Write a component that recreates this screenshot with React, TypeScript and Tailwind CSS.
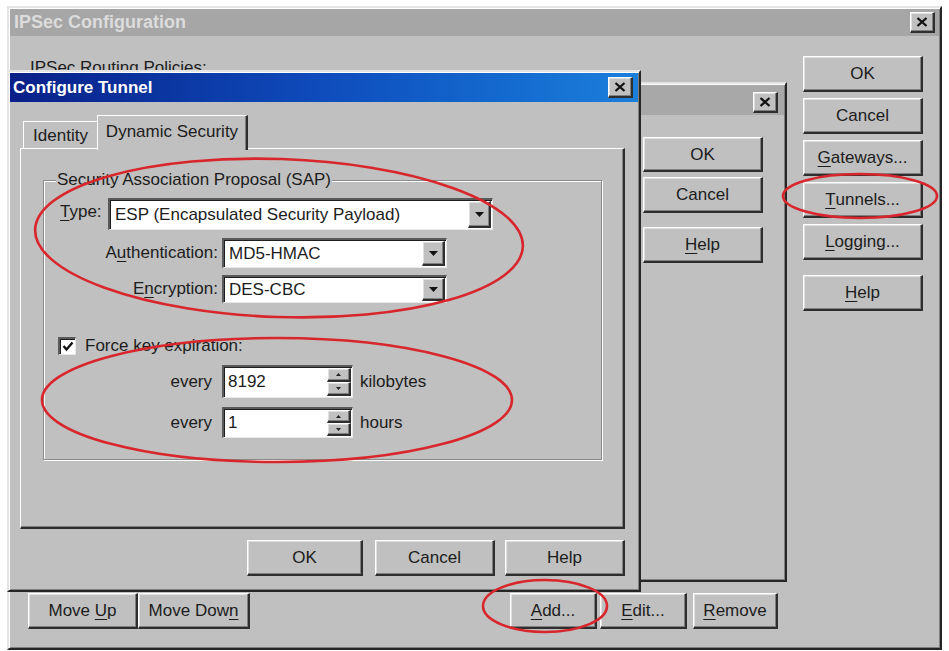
import type { ReactNode } from 'react';

// Classic 3D bevels
const raised =
  'bg-[#c0c0c0] border-t border-l border-t-white border-l-white border-r-2 border-b-2 border-r-[#2e2e2e] border-b-[#2e2e2e] shadow-[inset_-1px_-1px_0_#808080,inset_1px_1px_0_#dfdfdf]';
const sunken =
  'bg-white border-t-2 border-l-2 border-t-[#5a5a5a] border-l-[#5a5a5a] border-r border-b border-r-[#e8e8e8] border-b-[#e8e8e8] shadow-[inset_1px_1px_0_#1e1e1e]';
const frame =
  'bg-[#c0c0c0] border-2 border-t-[#e4e4e4] border-l-[#e4e4e4] border-r-[#262626] border-b-[#262626] shadow-[inset_1px_1px_0_#fff,inset_-1px_-1px_0_#808080]';

function Btn({ children, className = '' }: { children: ReactNode; className?: string }) {
  return (
    <button type="button" className={`${raised} flex items-center justify-center leading-none text-[#1c1c1c] ${className}`}>
      {children}
    </button>
  );
}

function Key({ children }: { children: ReactNode }) {
  return <span className="underline decoration-1 underline-offset-[3px]">{children}</span>;
}

function CloseBox({ className = '' }: { className?: string }) {
  return (
    <div className={`${raised} w-[25px] h-[21px] flex items-center justify-center ${className}`}>
      <svg width="12" height="10" viewBox="0 0 12 10">
        <path d="M1.5 1 L10.5 9 M10.5 1 L1.5 9" stroke="#111" strokeWidth="2.3" />
      </svg>
    </div>
  );
}

function Combo({ value, className = '' }: { value: string; className?: string }) {
  return (
    <div className={`${sunken} flex p-px ${className}`}>
      <div className="flex-1 flex items-center pl-[4px] whitespace-nowrap overflow-hidden">{value}</div>
      <div className={`${raised} w-[23px] flex items-center justify-center`}>
        <svg width="9" height="5" viewBox="0 0 9 5">
          <path d="M0 0H9L4.5 5Z" fill="#111" />
        </svg>
      </div>
    </div>
  );
}

function Spinner({ value, className = '' }: { value: string; className?: string }) {
  return (
    <div className={`${sunken} flex p-px ${className}`}>
      <div className="flex-1 flex items-center pl-[3px]">{value}</div>
      <div className="w-[24px] flex flex-col">
        <div className={`${raised} flex-1 flex items-center justify-center`}>
          <svg width="5" height="3" viewBox="0 0 5 3">
            <path d="M0 3H5L2.5 0Z" fill="#222" />
          </svg>
        </div>
        <div className={`${raised} flex-1 flex items-center justify-center`}>
          <svg width="5" height="3" viewBox="0 0 5 3">
            <path d="M0 0H5L2.5 3Z" fill="#222" />
          </svg>
        </div>
      </div>
    </div>
  );
}

function MainWindow() {
  return (
    <div className={`absolute left-[7px] top-[6px] w-[935px] h-[644px] flex flex-col p-px ${frame}`}>
      <div className="h-[27px] bg-[#a6a6a6] flex items-center pl-[4px] pr-[4px]">
        <span className="font-bold text-[18px] text-[#dcdcdc]">IPSec Configuration</span>
        <CloseBox className="ml-auto" />
      </div>
      <div className="flex-1 flex">
        <div className="flex-1 flex flex-col pl-[18px] pb-[18px]">
          <div className="mt-[22px] pl-[2px] leading-[20px]">IPSec Routing Policies:</div>
          <div className="flex-1" />
          <div className="flex h-[36px]">
            <Btn className="w-[110px]">
              Move&nbsp;<Key>U</Key>p
            </Btn>
            <Btn className="w-[112px]">
              Move Dow<Key>n</Key>
            </Btn>
            <Btn className="w-[87px] ml-[260px]">
              <Key>A</Key>dd...
            </Btn>
            <Btn className="w-[87px] ml-[3px]">
              <Key>E</Key>dit...
            </Btn>
            <Btn className="w-[85px] ml-[6px]">
              <Key>R</Key>emove
            </Btn>
          </div>
        </div>
        <div className="w-[120px] mr-[16px] pt-[20px] flex flex-col gap-[6px]">
          <Btn className="h-[36px]">OK</Btn>
          <Btn className="h-[36px]">Cancel</Btn>
          <Btn className="h-[36px]">
            <Key>G</Key>ateways...
          </Btn>
          <Btn className="h-[36px]">
            <Key>T</Key>unnels...
          </Btn>
          <Btn className="h-[36px]">
            <Key>L</Key>ogging...
          </Btn>
          <Btn className="h-[36px] mt-[9px]">
            <Key>H</Key>elp
          </Btn>
        </div>
      </div>
    </div>
  );
}

function PolicyDialog() {
  return (
    <div className={`absolute left-[470px] top-[82px] w-[317px] h-[500px] flex flex-col p-px ${frame}`}>
      <div className="h-[30px] bg-[#a8a8a8] flex items-end justify-end pr-[6px] pb-[2px]">
        <CloseBox />
      </div>
      <div className="flex flex-col items-end pr-[21px]">
        <Btn className="w-[120px] h-[35px] mt-[22px]">OK</Btn>
        <Btn className="w-[120px] h-[36px] mt-[5px]">Cancel</Btn>
        <Btn className="w-[120px] h-[36px] mt-[14px]">
          <Key>H</Key>elp
        </Btn>
      </div>
    </div>
  );
}

function TunnelDialog() {
  return (
    <div className={`absolute left-[7px] top-[70px] w-[634px] h-[522px] flex flex-col p-px ${frame}`}>
      <div className="h-[29px] bg-linear-to-r from-[#0a1f88] via-[#0f4cbc] to-[#1c7fdc] flex items-center pl-[3px] pr-[5px]">
        <span className="font-bold text-[17px] text-white">Configure Tunnel</span>
        <CloseBox className="ml-auto" />
      </div>

      {/* tab strip */}
      <div className="flex items-end h-[34px] mt-[13px] pl-[13px] relative z-10">
        <div className="w-[74px] h-[28px] flex items-center justify-center border-t border-l border-t-white border-l-white">
          Identity
        </div>
        <div className="w-[151px] h-[35px] -mb-px bg-[#c0c0c0] flex items-center justify-center pb-[2px] border-t border-l border-t-white border-l-white border-r-2 border-r-[#2e2e2e] shadow-[inset_-1px_0_0_#808080]">
          Dynamic Security
        </div>
      </div>

      <div className="ml-[10px] -mt-px w-[605px] h-[381px] border-t border-l border-t-white border-l-white border-r-2 border-b-2 border-r-[#2e2e2e] border-b-[#2e2e2e] shadow-[inset_-1px_-1px_0_#808080] pl-[22px] pt-[31px]">
        <div className="relative w-[559px] h-[280px] border border-[#8a8a8a] shadow-[1px_1px_0_#fff,inset_1px_1px_0_#fff] flex flex-col">
          <span className="absolute left-[12px] -top-[11px] px-px bg-[#c0c0c0] leading-[20px]">
            Security Association Proposal (SAP)
          </span>

          <div className="mt-[17px] h-[32px] flex items-center pl-[16px]">
            <span className="w-[48px] -mt-[4px]">
              <Key>T</Key>ype:
            </span>
            <Combo value="ESP (Encapsulated Security Payload)" className="w-[385px] h-full" />
          </div>
          <div className="mt-[8px] h-[30px] flex items-center">
            <span className="w-[174px] text-right">
              A<Key>u</Key>thentication:
            </span>
            <Combo value="MD5-HMAC" className="ml-[4px] w-[225px] h-full" />
          </div>
          <div className="mt-[7px] h-[28px] flex items-center">
            <span className="w-[174px] text-right">
              E<Key>n</Key>cryption:
            </span>
            <Combo value="DES-CBC" className="ml-[4px] w-[225px] h-full" />
          </div>

          <div className="mt-[34px] h-[18px] flex items-center pl-[14px]">
            <div className={`${sunken} w-[18px] h-[18px] flex items-center justify-center`}>
              <svg width="12" height="11" viewBox="0 0 12 11">
                <path d="M1.5 5 L4.5 8.5 L10.5 1.5" fill="none" stroke="#111" strokeWidth="2.4" />
              </svg>
            </div>
            <span className="ml-[9px]">Force key expiration:</span>
          </div>

          <div className="mt-[10px] h-[33px] flex items-center">
            <span className="w-[168px] text-right">every</span>
            <Spinner value="8192" className="ml-[10px] w-[131px] h-full" />
            <span className="ml-[7px]">kilobytes</span>
          </div>
          <div className="mt-[9px] h-[31px] flex items-center">
            <span className="w-[168px] text-right">every</span>
            <Spinner value="1" className="ml-[10px] w-[131px] h-full" />
            <span className="ml-[7px]">hours</span>
          </div>
        </div>
      </div>

      <div className="flex mt-[11px] pl-[237px] h-[36px]">
        <Btn className="w-[116px]">OK</Btn>
        <Btn className="w-[120px] ml-[12px]">Cancel</Btn>
        <Btn className="w-[120px] ml-[10px]">Help</Btn>
      </div>
    </div>
  );
}

// Hand-drawn red rings around the important settings
function Marks() {
  return (
    <svg className="absolute inset-0 pointer-events-none" width="949" height="651" viewBox="0 0 949 651">
      <g fill="none" stroke="#d8262c" strokeWidth="2.6">
        <ellipse cx="279" cy="238" rx="244" ry="79" transform="rotate(2 279 238)" />
        <ellipse cx="277" cy="400" rx="235" ry="62" />
        <ellipse cx="860" cy="196" rx="77" ry="22" />
        <ellipse cx="545" cy="606" rx="62" ry="26" />
      </g>
    </svg>
  );
}

export default function App() {
  return (
    <div className="relative w-[949px] h-[651px] overflow-hidden bg-white font-['Liberation_Sans',Arial,sans-serif] text-[17px] text-[#1c1c1c]">
      <MainWindow />
      <PolicyDialog />
      <TunnelDialog />
      <Marks />
    </div>
  );
}
